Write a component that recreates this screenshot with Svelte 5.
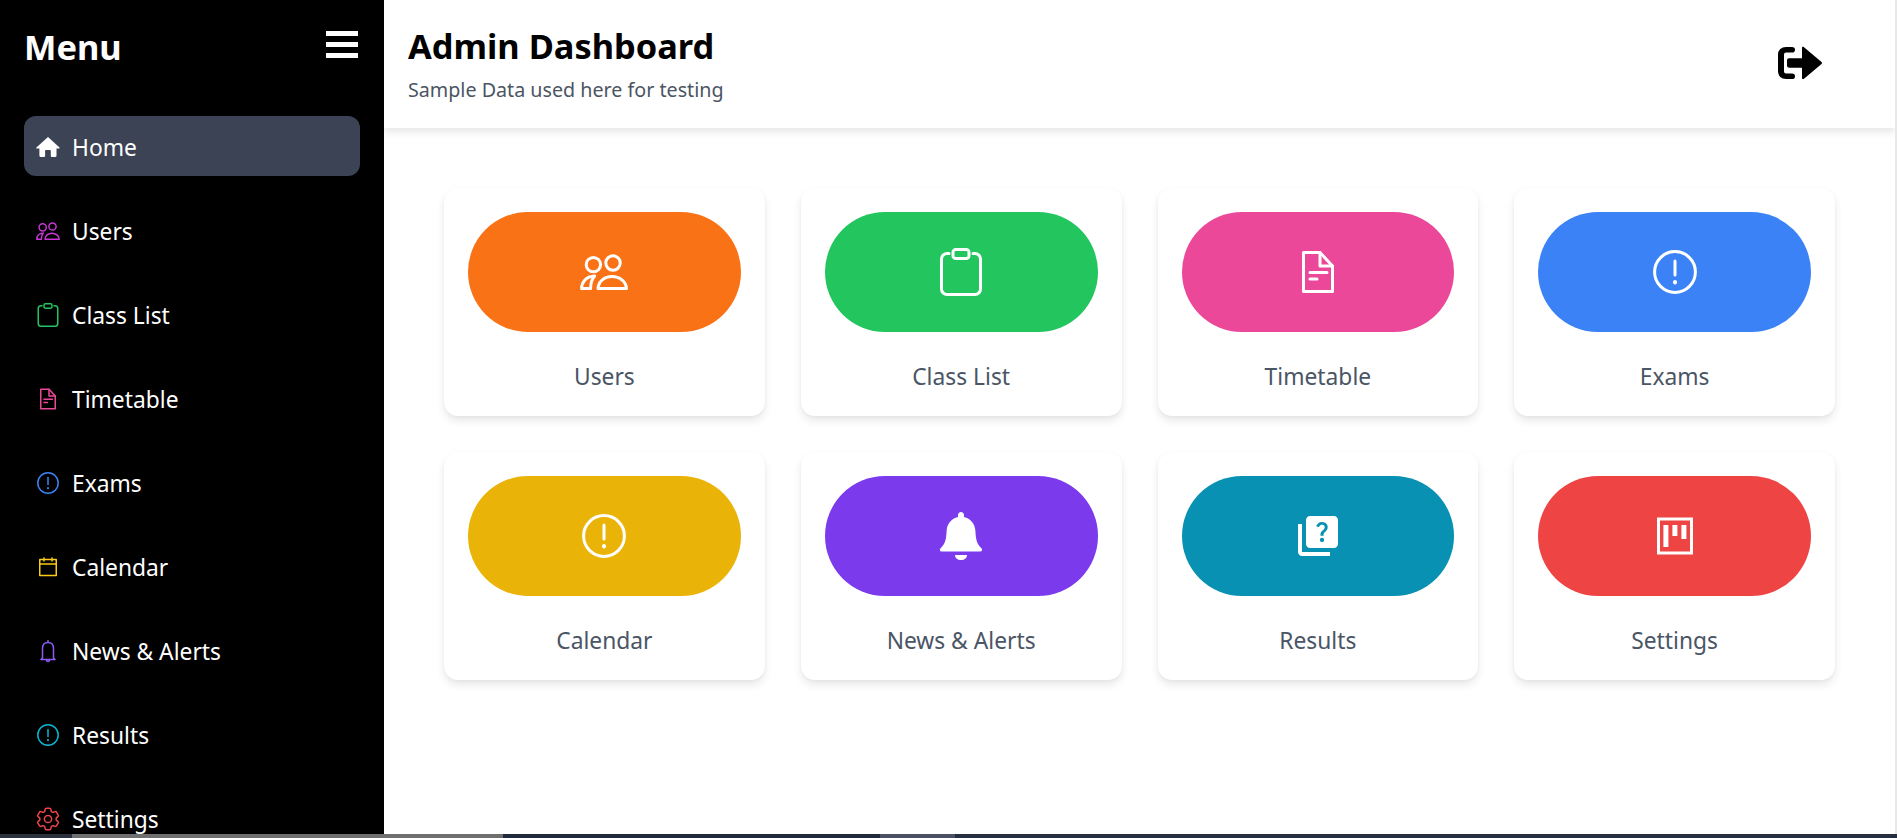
<script>
  const navItems = [
    { label: 'Home', icon: 'home', color: '#ffffff', active: true },
    { label: 'Users', icon: 'users', color: '#c935d6' },
    { label: 'Class List', icon: 'clipboard', color: '#22c55e' },
    { label: 'Timetable', icon: 'file', color: '#ec4899' },
    { label: 'Exams', icon: 'alert', color: '#3b82f6' },
    { label: 'Calendar', icon: 'calendar', color: '#facc15' },
    { label: 'News & Alerts', icon: 'bell', color: '#8b5cf6' },
    { label: 'Results', icon: 'alert', color: '#06b6d4' },
    { label: 'Settings', icon: 'gear', color: '#ef4444' }
  ];

  const cards = [
    { label: 'Users', icon: 'users', color: '#f97316' },
    { label: 'Class List', icon: 'clipboard', color: '#22c55e' },
    { label: 'Timetable', icon: 'file', color: '#ec4899' },
    { label: 'Exams', icon: 'alert', color: '#3b82f6' },
    { label: 'Calendar', icon: 'alert', color: '#eab308' },
    { label: 'News & Alerts', icon: 'bellsolid', color: '#7c3aed' },
    { label: 'Results', icon: 'quiz', color: '#0891b2' },
    { label: 'Settings', icon: 'board', color: '#ef4444' }
  ];
</script>

{#snippet icon(name, size)}
  <svg width={size} height={size} viewBox="0 0 24 24" fill="none" stroke="currentColor" stroke-width="1.5" stroke-linejoin="round" stroke-linecap="round">
    {#if name === 'home'}
      <path fill="currentColor" stroke="none" d="M12 2 .4 12.400c-.4.4-.1 1 .4 1H3.400v7.400c0 .7.500 1.200 1.200 1.200h3.600c.5 0 .9-.4.9-.9v-5.300c0-.5.4-.9.9-.9h3.900c.5 0 .9.4.9.9v5.300c0 .5.4.9.9.9h3.600c.7 0 1.200-.5 1.200-1.200v-7.400h2.600c.5 0 .8-.6.4-1z" />
    {:else if name === 'users'}
      <circle cx="6.700" cy="8.300" r="3.600" />
      <circle cx="16.500" cy="7.500" r="3.600" />
      <path d="M.8 20.250c0-3 2-6 6.500-6.200-1.400 1.600-2 3.700-2 6.200z" />
      <path d="M9 20.250c.2-3.500 3.200-6 7-6s7 2.500 7.250 6z" />
    {:else if name === 'clipboard'}
      <path d="M6 2.750H5C3.500 2.750 2.250 4 2.250 5.500v15c0 1.500 1.250 2.750 2.750 2.750h14c1.500 0 2.750-1.250 2.750-2.750v-15c0-1.500-1.250-2.750-2.750-2.750h-1" />
      <rect x="8" y=".75" width="8" height="4.500" rx="1.400" />
    {:else if name === 'file'}
      <path d="M4.750 2.250H13L19.250 9v12.750H4.750z" />
      <path d="M13 2.250V9h6.250" />
      <path d="M8 12.200h8.500M8 15.500h3.500" />
    {:else if name === 'alert'}
      <circle cx="12" cy="12" r="10.200" />
      <path d="M12 6.500v7" />
      <path d="M12 17v.2" stroke-width="2" />
    {:else if name === 'calendar'}
      <rect x="3.750" y="4.500" width="16.500" height="16" />
      <path d="M3.750 9h16.500M8 3v3M16 3v3" />
    {:else if name === 'bell'}
      <path d="M12 1.500v2M6.500 19V9.500c0-3.500 2-6 5.500-6s5.500 2.500 5.500 6V19l1.500 1.500H5zM10.500 20.500c0 1 .7 2 1.500 2s1.500-1 1.500-2" />
    {:else if name === 'bellsolid'}
      <path fill="currentColor" stroke="none" d="M12 0c-.8 0-1.500.7-1.500 1.500v1C7.200 3.200 5 6 4.800 9.500c-.2 4-.6 6.500-3 8.600-.7.700-.3 1.600.5 1.600h19.400c.8 0 1.200-.9.500-1.600-2.400-2.100-2.800-4.600-3-8.600C19 6 16.800 3.200 13.500 2.500v-1C13.500.7 12.800 0 12 0z" />
      <path fill="currentColor" stroke="none" d="M9 21.500h6c0 1.500-1.300 2.500-3 2.500s-3-1-3-2.500z" />
    {:else if name === 'quiz'}
      <path fill="currentColor" stroke="none" fill-rule="evenodd" d="M4 6H2v14c0 1.100.9 2 2 2h14v-2H4V6zm16-4H8c-1.100 0-2 .9-2 2v12c0 1.100.9 2 2 2h12c1.100 0 2-.9 2-2V4c0-1.100-.9-2-2-2zm-5.990 13c-.59 0-1.050-.47-1.050-1.050 0-.59.47-1.040 1.050-1.040.59 0 1.040.45 1.040 1.040-.01.58-.45 1.050-1.040 1.050zm2.500-6.170c-.63.93-1.230 1.210-1.560 1.810-.13.24-.18.4-.18 1.180h-1.520c0-.41-.06-1.080.26-1.650.41-.73 1.180-1.160 1.630-1.800.48-.68.21-1.940-1.140-1.940-.88 0-1.320.67-1.500 1.230l-1.370-.57C11.510 5.960 12.520 5 13.990 5c1.230 0 2.080.56 2.510 1.260.37.61.58 1.730.01 2.570z" />
    {:else if name === 'board'}
      <rect x="3.750" y="3.500" width="16.500" height="17" stroke-linejoin="miter" />
      <path fill="currentColor" stroke="none" d="M6.200 6.500h2.500v11H6.200zM10.700 6.500h2.500V12h-2.500zM15.200 6.500h2.500v7h-2.500z" />
    {:else if name === 'gear'}
      <g transform="translate(12 12) scale(1.2) translate(-12 -12)" stroke-width="1.250">
        <path d="M9.594 3.940c.09-.542.56-.94 1.110-.94h2.593c.55 0 1.020.398 1.110.94l.213 1.281c.063.374.313.686.645.87.074.04.147.083.22.127.325.196.72.257 1.075.124l1.217-.456a1.125 1.125 0 0 1 1.370.49l1.296 2.247a1.125 1.125 0 0 1-.26 1.431l-1.003.827c-.293.241-.438.613-.43.992a7.723 7.723 0 0 1 0 .255c-.008.378.137.75.43.991l1.004.827c.424.35.534.955.26 1.430l-1.298 2.247a1.125 1.125 0 0 1-1.369.491l-1.217-.456c-.355-.133-.75-.072-1.076.124a6.470 6.470 0 0 1-.22.128c-.331.183-.581.495-.644.869l-.213 1.281c-.09.543-.56.94-1.110.94h-2.594c-.55 0-1.019-.398-1.110-.94l-.213-1.281c-.062-.374-.312-.686-.644-.87a6.520 6.520 0 0 1-.22-.127c-.325-.196-.72-.257-1.076-.124l-1.217.456a1.125 1.125 0 0 1-1.369-.49l-1.297-2.247a1.125 1.125 0 0 1 .26-1.431l1.004-.827c.292-.24.437-.613.43-.991a6.932 6.932 0 0 1 0-.255c.007-.38-.138-.751-.43-.992l-1.004-.827a1.125 1.125 0 0 1-.26-1.430l1.297-2.247a1.125 1.125 0 0 1 1.370-.491l1.216.456c.356.133.751.072 1.076-.124.072-.044.146-.086.22-.128.332-.183.582-.495.644-.869l.214-1.280z" />
        <circle cx="12" cy="12" r="3" />
      </g>
    {/if}
  </svg>
{/snippet}

<div class="page">
  <div class="shell">
    <aside class="sidebar">
      <div class="side-head">
        <span class="menu-title">Menu</span>
        <div class="burger"><i></i><i></i><i></i></div>
      </div>
      <nav>
        {#each navItems as item}
          <div class="nav-item" class:active={item.active}>
            <span class="nav-icon" style="color: {item.color}">{@render icon(item.icon, 24)}</span>
            <span>{item.label}</span>
          </div>
        {/each}
      </nav>
    </aside>

    <main>
      <header>
        <div>
          <h1>Admin Dashboard</h1>
          <p>Sample Data used here for testing</p>
        </div>
        <svg class="logout" width="46" height="34" viewBox="0 0 46 36" preserveAspectRatio="none">
          <path d="M15 4H9C6 4 4 6 4 9v18c0 3 2 5 5 5h6" fill="none" stroke="#000" stroke-width="6" stroke-linecap="round" />
          <path d="M12 13h13V2c0-1 1-1.500 2-.7L44.500 17c.7.600.7 1.400 0 2L27 34.700c-1 .8-2 .3-2-.7V23H12c-1 0-2-1-2-2v-6c0-1 1-2 2-2z" fill="#000" />
        </svg>
      </header>

      <section class="grid">
        {#each cards as card}
          <div class="card">
            <div class="pill" style="background: {card.color}">{@render icon(card.icon, 48)}</div>
            <div class="card-label">{card.label}</div>
          </div>
        {/each}
      </section>
    </main>
    <div class="scroll-edge"></div>
  </div>

  <div class="taskbar">
    <div class="tb-a"></div>
    <div class="tb-b"></div>
    <div class="tb-c"></div>
    <div class="tb-d"></div>
    <div class="tb-e"></div>
  </div>
</div>

<style>
  :global(body) {
    margin: 0;
    background: #fff;
    overflow: hidden;
  }

  .page {
    width: 1897px;
    height: 838px;
    display: flex;
    flex-direction: column;
    overflow: hidden;
    font-family: "Noto Sans", "Open Sans", sans-serif;
  }

  .shell {
    flex: 1;
    min-height: 0;
    display: flex;
    overflow: hidden;
  }

  .sidebar {
    width: 384px;
    flex-shrink: 0;
    background: #000;
    color: #fff;
    padding: 24px 24px 0;
    box-sizing: border-box;
    overflow: hidden;
  }

  .side-head {
    display: flex;
    justify-content: space-between;
    align-items: center;
    height: 44px;
    margin-bottom: 48px;
  }

  .menu-title {
    font-size: 34.4px;
    font-weight: 700;
  }

  .burger {
    width: 32px;
    display: flex;
    flex-direction: column;
    gap: 6px;
    margin-right: 2px;
    margin-top: -4px;
  }

  .burger i {
    display: block;
    height: 5px;
    background: #fff;
  }

  nav {
    display: flex;
    flex-direction: column;
    gap: 24px;
  }

  .nav-item {
    height: 60px;
    box-sizing: border-box;
    padding: 2px 0 0 12px;
    flex-shrink: 0;
    display: flex;
    align-items: center;
    gap: 12px;
    border-radius: 12px;
    font-size: 22.8px;
  }

  .nav-item.active {
    background: #3b4354;
  }

  .nav-icon {
    width: 24px;
    height: 24px;
    display: flex;
  }

  main {
    flex: 1;
    min-width: 0;
    background: #fff;
  }

  header {
    height: 128px;
    box-sizing: border-box;
    padding: 0 72px 2px 24px;
    display: flex;
    justify-content: space-between;
    align-items: center;
    background: #fff;
    box-shadow: 0 4px 8px rgba(0, 0, 0, 0.1);
  }

  h1 {
    margin: 0 0 7px;
    font-size: 34.4px;
    line-height: 46px;
    font-weight: 700;
    color: #000;
  }

  p {
    margin: 0;
    font-size: 19.7px;
    line-height: 28px;
    color: #4b5563;
  }

  .logout {
    margin-bottom: 1px;
  }

  .grid {
    display: grid;
    grid-template-columns: repeat(4, 1fr);
    gap: 36px;
    padding: 60px 60px 0;
  }

  .card {
    height: 228px;
    box-sizing: border-box;
    padding: 24px;
    border-radius: 14px;
    background: #fff;
    box-shadow: 0 5px 8px rgba(0, 0, 0, 0.09), 0 1px 3px rgba(0, 0, 0, 0.04);
    display: flex;
    flex-direction: column;
    align-items: center;
  }

  .pill {
    width: 100%;
    height: 120px;
    border-radius: 60px;
    color: #fff;
    display: flex;
    align-items: center;
    justify-content: center;
  }

  .card-label {
    margin-top: 30px;
    font-size: 22.8px;
    line-height: 29px;
    color: #4a5565;
  }

  .scroll-edge {
    width: 2px;
    flex-shrink: 0;
    background: #e8e8e8;
  }

  .taskbar {
    height: 4px;
    flex-shrink: 0;
    display: flex;
    background: #1f2a3d;
  }

  .tb-a { width: 72px; background: #2a303c; }
  .tb-b { width: 431px; background: #6f6f6f; }
  .tb-c { width: 377px; }
  .tb-d { width: 75px; background: #4b5063; }
  .tb-e { flex: 1; background: #262e42; }
</style>
